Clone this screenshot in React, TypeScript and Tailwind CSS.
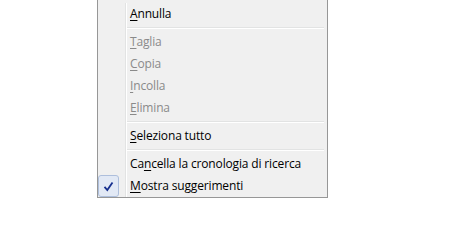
const items: (
  | { type: 'item'; pre: string; key: string; post: string; disabled?: boolean; checked?: boolean }
  | { type: 'sep' }
)[] = [
  { type: 'item', pre: '', key: 'A', post: 'nnulla' },
  { type: 'sep' },
  { type: 'item', pre: '', key: 'T', post: 'aglia', disabled: true },
  { type: 'item', pre: '', key: 'C', post: 'opia', disabled: true },
  { type: 'item', pre: '', key: 'I', post: 'ncolla', disabled: true },
  { type: 'item', pre: '', key: 'E', post: 'limina', disabled: true },
  { type: 'sep' },
  { type: 'item', pre: '', key: 'S', post: 'eleziona tutto' },
  { type: 'sep' },
  { type: 'item', pre: 'Ca', key: 'n', post: 'cella la cronologia di ricerca' },
  { type: 'item', pre: '', key: 'M', post: 'ostra suggerimenti', checked: true },
];

const Gutter = ({ children }: { children?: React.ReactNode }) => (
  <>
    <div className="w-[28px] shrink-0 border-r border-[#e2e3e3] flex items-center">{children}</div>
    <div className="w-px shrink-0 bg-white" />
  </>
);

export default function App() {
  return (
    <div className="w-[450px] h-[200px] bg-white overflow-hidden" style={{ fontFamily: '"Open Sans", "Noto Sans", Arial, sans-serif' }}>
      <div className="ml-[97px] w-[231px] bg-[#f0f0f0] border-x border-b border-[#979797] pt-[3px]">
        {items.map((it, i) =>
          it.type === 'sep' ? (
            <div key={i} className="flex h-[6px]">
              <Gutter />
              <div className="flex-1 mr-[3px] pt-[2px]">
                <div className="h-px bg-[#e2e3e3]" />
                <div className="h-px bg-white" />
              </div>
            </div>
          ) : (
            <div key={i} className="flex h-[22px]">
              <Gutter>
                {it.checked && (
                  <div className="w-[21px] h-[22px] rounded-[3px] border border-[#aebfdc] bg-[#e2e9f5] flex items-center justify-center">
                    <svg width="11" height="11" viewBox="0 0 11 11">
                      <path d="M1.5 5.8 L4.3 9 L9.5 1.5" fill="none" stroke="#17308f" strokeWidth="1.8" />
                    </svg>
                  </div>
                )}
              </Gutter>
              <div
                className={`flex-1 pl-[3px] text-[12px] tracking-[-0.15px] leading-[22px] whitespace-nowrap ${
                  it.disabled ? 'text-[#8a8a8a]' : 'text-black'
                }`}
              >
                {it.pre}
                <u className="underline-offset-2">{it.key}</u>
                {it.post}
              </div>
            </div>
          )
        )}
      </div>
    </div>
  );
}
